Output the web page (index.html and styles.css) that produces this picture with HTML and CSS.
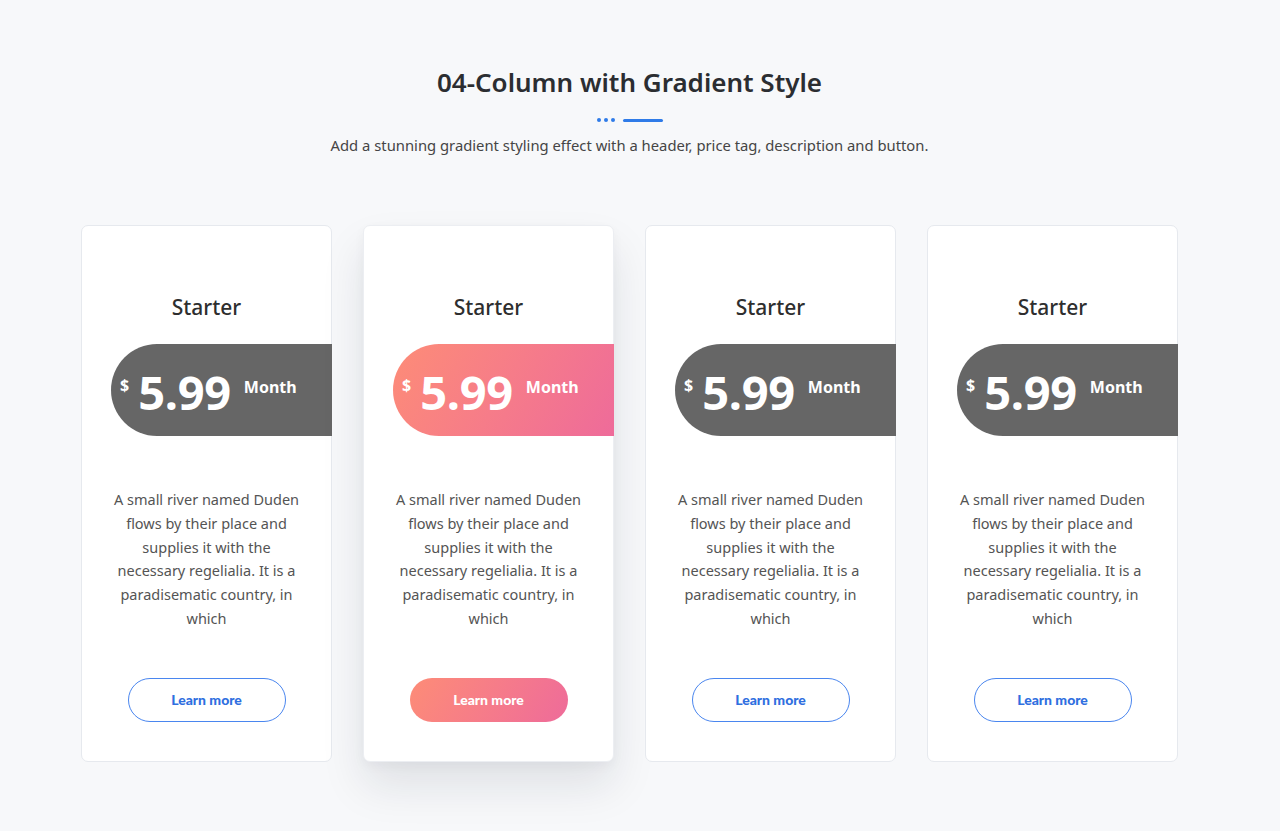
FILE: index.html
```html
<!DOCTYPE html>
<html>
<head>
<meta charset="utf-8">
<link rel="stylesheet" href="styles.css">
</head>
<body>
<main class="page">
  <header class="intro">
    <h1 class="intro-title">04-Column with Gradient Style</h1>
    <div class="divider"><span class="dot"></span><span class="dot"></span><span class="dot"></span><span class="bar"></span></div>
    <p class="intro-text">Add a stunning gradient styling effect with a header, price tag, description and button.</p>
  </header>
  <section class="plans">
    <article class="plan">
      <h2 class="plan-name">Starter</h2>
      <div class="price"><span class="cur">$</span><span class="amount">5.99</span><span class="per">Month</span></div>
      <p class="plan-desc">A small river named Duden flows by their place and supplies it with the necessary regelialia. It is a paradisematic country, in which</p>
      <a class="btn" href="#">Learn more</a>
    </article>
    <article class="plan plan-featured">
      <h2 class="plan-name">Starter</h2>
      <div class="price"><span class="cur">$</span><span class="amount">5.99</span><span class="per">Month</span></div>
      <p class="plan-desc">A small river named Duden flows by their place and supplies it with the necessary regelialia. It is a paradisematic country, in which</p>
      <a class="btn" href="#">Learn more</a>
    </article>
    <article class="plan">
      <h2 class="plan-name">Starter</h2>
      <div class="price"><span class="cur">$</span><span class="amount">5.99</span><span class="per">Month</span></div>
      <p class="plan-desc">A small river named Duden flows by their place and supplies it with the necessary regelialia. It is a paradisematic country, in which</p>
      <a class="btn" href="#">Learn more</a>
    </article>
    <article class="plan">
      <h2 class="plan-name">Starter</h2>
      <div class="price"><span class="cur">$</span><span class="amount">5.99</span><span class="per">Month</span></div>
      <p class="plan-desc">A small river named Duden flows by their place and supplies it with the necessary regelialia. It is a paradisematic country, in which</p>
      <a class="btn" href="#">Learn more</a>
    </article>
  </section>
</main>
</body>
</html>
```
FILE: styles.css
```css
* { box-sizing: border-box; }
html, body { margin: 0; padding: 0; }
body {
  background: #f7f8fa;
  font-family: "Noto Sans", "Open Sans", sans-serif;
  color: #333;
  height: 831px;
  overflow: hidden;
}
.page {
  width: 1259px;
  padding-top: 62px;
}
.intro { text-align: center; }
.intro-title {
  margin: 0;
  font-size: 26px;
  line-height: 40px;
  font-weight: 600;
  color: #2b2d31;
}
.divider {
  display: flex;
  justify-content: center;
  align-items: center;
  gap: 3px;
  margin-top: 16px;
  height: 4px;
}
.dot {
  width: 4px; height: 4px; border-radius: 50%;
  background: #2f7be8;
}
.bar {
  width: 40px; height: 3px; border-radius: 2px;
  background: #2f7be8;
  margin-left: 5px;
}
.intro-text {
  margin: 12px 0 0;
  font-size: 14.8px;
  line-height: 22px;
  color: #454545;
}
.plans {
  display: flex;
  justify-content: center;
  gap: 31px;
  margin-top: 69px;
}
.plan {
  width: 251px;
  height: 537px;
  background: #fff;
  border: 1px solid #e6e9ee;
  border-radius: 7px;
  display: flex;
  flex-direction: column;
  align-items: center;
  padding-top: 66px;
}
.plan-featured {
  border-color: #eceef2;
  box-shadow: 0 24px 44px rgba(20, 30, 50, 0.10), 0 4px 12px rgba(20,30,50,0.04);
}
.plan-name {
  margin: 0;
  font-size: 21px;
  line-height: 30px;
  font-weight: 500;
  color: #2e2e2e;
}
.price {
  align-self: stretch;
  margin: 22px -1px 0 29px;
  height: 92px;
  border-radius: 46px 0 0 46px;
  background: #666666;
  color: #fff;
  display: flex;
  align-items: flex-start;
  padding-left: 9px;
  font-weight: 700;
}
.plan-featured .price {
  background: linear-gradient(120deg, #fd8c77 0%, #f67c89 50%, #ee6b9a 100%);
}
.cur {
  font-size: 16px;
  margin-top: 30px;
  margin-right: 9px;
}
.amount {
  font-size: 47px;
  line-height: 52px;
  margin-top: 22px;
  letter-spacing: -0.3px;
}
.per {
  font-size: 16px;
  margin-top: 32px;
  margin-left: 13px;
}
.plan-desc {
  margin: 52px 0 0;
  padding: 0 30px;
  text-align: center;
  font-size: 14.5px;
  line-height: 23.8px;
  color: #545454;
}
.btn {
  margin-top: 47px;
  width: 158px;
  height: 44px;
  border: 1px solid #4a86ef;
  border-radius: 22px;
  display: flex;
  align-items: center;
  justify-content: center;
  font-family: "Lato", "Noto Sans", sans-serif;
  font-weight: 900;
  font-size: 14px;
  color: #2f6fe0;
  text-decoration: none;
}
.plan-featured .btn {
  border: none;
  background: linear-gradient(120deg, #fd8c77 0%, #f67c89 50%, #ee6b9a 100%);
  color: #fff;
}
```
